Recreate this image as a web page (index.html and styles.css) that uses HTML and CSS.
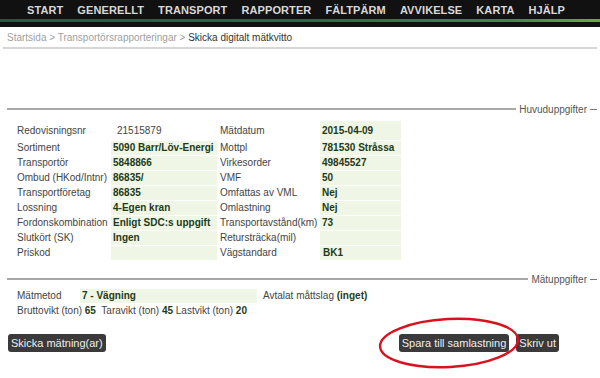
FILE: index.html
```html
<!DOCTYPE html>
<html lang="sv">
<head>
<meta charset="utf-8">
<title>Skicka digitalt mätkvitto</title>
<link rel="stylesheet" href="styles.css">
</head>
<body>
<nav class="topnav">
  <ul class="menu">
    <li>START</li>
    <li>GENERELLT</li>
    <li>TRANSPORT</li>
    <li>RAPPORTER</li>
    <li>FÄLTPÄRM</li>
    <li>AVVIKELSE</li>
    <li>KARTA</li>
    <li>HJÄLP</li>
  </ul>
  <div class="stripe"></div>
</nav>
<div class="crumbs"><span class="crumb-link">Startsida &gt; Transportörsrapporteringar &gt; </span><span class="crumb-cur">Skicka digitalt mätkvitto</span></div>

<section class="group group-main">
  <div class="legend"><div class="rule"></div><span class="legend-text">Huvuduppgifter</span><div class="rule-end"></div></div>
  <table class="info">
    <tr class="first"><td class="lbl">Redovisningsnr</td><td class="val plain">21515879</td><td class="lbl2">Mätdatum</td><td class="val2">2015-04-09</td></tr>
    <tr><td class="lbl">Sortiment</td><td class="val">5090 Barr/Löv-Energi</td><td class="lbl2">Mottpl</td><td class="val2">781530 Stråssa</td></tr>
    <tr><td class="lbl">Transportör</td><td class="val">5848866</td><td class="lbl2">Virkesorder</td><td class="val2">49845527</td></tr>
    <tr><td class="lbl">Ombud (HKod/Intnr)</td><td class="val">86835/</td><td class="lbl2">VMF</td><td class="val2">50</td></tr>
    <tr><td class="lbl">Transportföretag</td><td class="val">86835</td><td class="lbl2">Omfattas av VML</td><td class="val2">Nej</td></tr>
    <tr><td class="lbl">Lossning</td><td class="val">4-Egen kran</td><td class="lbl2">Omlastning</td><td class="val2">Nej</td></tr>
    <tr><td class="lbl">Fordonskombination</td><td class="val">Enligt SDC:s uppgift</td><td class="lbl2">Transportavstånd(km)</td><td class="val2">73</td></tr>
    <tr><td class="lbl">Slutkört (SK)</td><td class="val">Ingen</td><td class="lbl2">Retursträcka(mil)</td><td class="val2"></td></tr>
    <tr><td class="lbl">Priskod</td><td class="val"></td><td class="lbl2">Vägstandard</td><td class="val2 indent">BK1</td></tr>
  </table>
</section>

<section class="group group-meas">
  <div class="legend"><div class="rule"></div><span class="legend-text">Mätuppgifter</span><div class="rule-end"></div></div>
  <div class="meas-row">
    <span class="m-lbl">Mätmetod</span><span class="m-val">7 - Vägning</span><span class="m-extra">Avtalat måttslag <b>(inget)</b></span>
  </div>
  <div class="weights">Bruttovikt (ton) <b>65</b>&nbsp; Taravikt (ton) <b>45</b> Lastvikt (ton) <b>20</b></div>
</section>

<div class="actions">
  <button class="btn">Skicka mätning(ar)</button>
  <div class="actions-right">
    <button class="btn">Spara till samlastning</button>
    <button class="btn">Skriv ut</button>
    <svg class="circle" width="150" height="56" viewBox="0 0 150 56"><ellipse cx="75" cy="28" rx="69" ry="24" transform="rotate(-3 75 28)" fill="none" stroke="#d8121e" stroke-width="2.4"/></svg>
  </div>
</div>
</body>
</html>
```
FILE: styles.css
```css
html, body { margin: 0; padding: 0; background: #fff; }
body { font-family: "Liberation Sans", Arial, sans-serif; font-size: 10px; color: #444; width: 600px; height: 378px; overflow: hidden; position: relative; }

.topnav { background: #111; height: 27px; }
.menu { list-style: none; margin: 0; padding: 4px 0 0 27px; display: flex; gap: 14px; height: 15px; }
.menu li { font-weight: bold; font-size: 11px; color: #d8d8d8; line-height: 13px; letter-spacing: 0.1px; }
.stripe { margin-top: 0; height: 3px; background: linear-gradient(to right, #1e5b44 0%, #236a48 50%, #3f8a42 85%, #64ad45 100%); }

.crumbs { padding: 4px 0 2px 4px; height: 14px; line-height: 14px; font-size: 10px; border-bottom: 2px solid #d6d6d6; margin: 0 3px; }
.crumb-link { color: #a0a0a0; }
.crumb-cur { color: #333; }

.group { padding: 0 3px 0 7px; }
.group-main { margin-top: 54px; }
.legend { display: flex; align-items: center; height: 12px; }
.rule { flex: 1; border-top: 2px solid #a8a8a8; }
.rule-end { width: 7px; border-top: 1px solid #777; margin-left: 3px; }
.legend-text { color: #555; font-size: 10px; padding-left: 3px; }

.info { border-collapse: collapse; margin: 6px 0 0 10px; }
.info td { height: 14px; padding: 0; line-height: 14px; border-bottom: 1px solid #fff; white-space: nowrap; }
.info tr.first td { height: 19px; line-height: 19px; }
.lbl { width: 94px; padding-left: 0; }
.val { width: 104px; background: #eff6e6; font-weight: bold; color: #1f3a17; padding-left: 2px !important; }
.val.plain { background: #fff; font-weight: normal; color: #444; padding-left: 6px !important; width: 100px; }
.lbl2 { width: 100px; padding-left: 3px !important; }
.val2 { width: 78px; background: #eff6e6; font-weight: bold; color: #1f3a17; padding-left: 2px !important; }
.val2.indent { padding-left: 3px !important; }

.group-meas { margin-top: 12px; }
.meas-row { display: flex; align-items: center; margin: 4px 0 0 10px; height: 14px; line-height: 14px; }
.m-lbl { width: 63px; }
.m-val { width: 175px; background: #eff6e6; font-weight: bold; color: #1f3a17; padding-left: 2px; }
.m-extra { padding-left: 6px; }
.m-extra b, .weights b { color: #1f3a17; }
.weights { margin: 1px 0 0 10px; line-height: 14px; }

.actions { display: flex; justify-content: space-between; align-items: center; margin-top: 16px; padding: 0 41px 0 8px; }
.actions-right { display: flex; gap: 7px; position: relative; }
.btn { font-family: "Liberation Sans", Arial, sans-serif; font-size: 11px; color: #eee; background: #3a3a3a; border: 0; border-radius: 3px; height: 18px; padding: 0 3px; line-height: 18px; }
.circle { position: absolute; left: -25px; top: -19px; pointer-events: none; }
```
